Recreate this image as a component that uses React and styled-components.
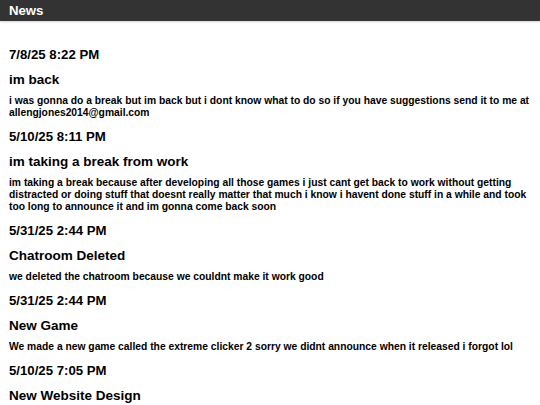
import React from "react";
import styled, { createGlobalStyle } from "styled-components";

const Global = createGlobalStyle`
  html, body {
    margin: 0;
    padding: 0;
    background: #ffffff;
    font-family: "Liberation Sans", Arial, sans-serif;
  }
`;

const Page = styled.div`
  display: flex;
  flex-direction: column;
  min-height: 405px;
  background: #fff;
`;

const TopBar = styled.header`
  height: 21px;
  background: #333333;
  box-shadow: 0 1px 2px rgba(0, 0, 0, 0.18);
  display: flex;
  align-items: center;
  padding: 0 9px;
`;

const TopTitle = styled.h1`
  margin: 0;
  color: #ffffff;
  font-size: 13.2px;
  font-weight: bold;
  line-height: 21px;
`;

const Feed = styled.main`
  display: flex;
  flex-direction: column;
  padding: 26px 9px 0;
`;

const Post = styled.article`
  display: flex;
  flex-direction: column;
  margin-bottom: 10px;
`;

const PostDate = styled.h3`
  margin: 0;
  font-size: 13.2px;
  line-height: 16px;
  font-weight: bold;
  color: #000;
`;

const PostTitle = styled.h2`
  margin: 9px 0 7px;
  font-size: 13.5px;
  line-height: 16px;
  font-weight: bold;
  color: #000;
`;

const PostBody = styled.p`
  margin: 0;
  font-size: 10.3px;
  line-height: 12px;
  font-weight: bold;
  color: #000;
`;

const posts = [
  {
    date: "7/8/25 8:22 PM",
    title: "im back",
    body: "i was gonna do a break but im back but i dont know what to do so if you have suggestions send it to me at allengjones2014@gmail.com",
  },
  {
    date: "5/10/25 8:11 PM",
    title: "im taking a break from work",
    body: "im taking a break because after developing all those games i just cant get back to work without getting distracted or doing stuff that doesnt really matter that much i know i havent done stuff in a while and took too long to announce it and im gonna come back soon",
  },
  {
    date: "5/31/25 2:44 PM",
    title: "Chatroom Deleted",
    body: "we deleted the chatroom because we couldnt make it work good",
  },
  {
    date: "5/31/25 2:44 PM",
    title: "New Game",
    body: "We made a new game called the extreme clicker 2 sorry we didnt announce when it released i forgot lol",
  },
  {
    date: "5/10/25 7:05 PM",
    title: "New Website Design",
    body: "",
  },
];

export default function App() {
  return (
    <Page>
      <Global />
      <TopBar>
        <TopTitle>News</TopTitle>
      </TopBar>
      <Feed>
        {posts.map((p, i) => (
          <Post key={i}>
            <PostDate>{p.date}</PostDate>
            <PostTitle>{p.title}</PostTitle>
            {p.body && <PostBody>{p.body}</PostBody>}
          </Post>
        ))}
      </Feed>
    </Page>
  );
}
